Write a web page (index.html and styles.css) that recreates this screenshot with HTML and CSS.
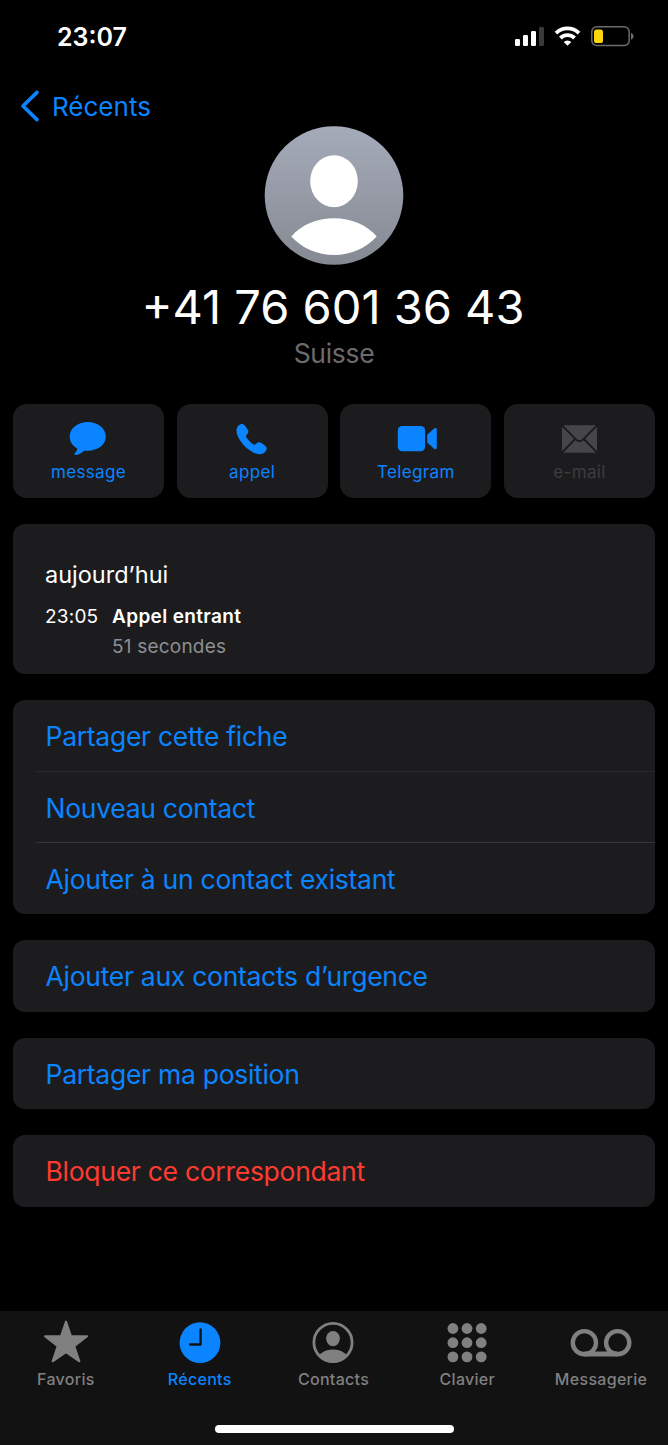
FILE: index.html
```
<!DOCTYPE html>
<html lang="fr">
  <head>
    <meta charset="UTF-8">
    <meta name="viewport" content="width=device-width, initial-scale=1">
    <title>Récents</title>
    <link rel="stylesheet" href="styles.css">
  </head>

  <body>

    <div class="status">
      <span class="heure">23:07</span>
      <svg class="status-icons" width="120" height="22" viewBox="514 25 120 22">
        <g fill="#fff">
          <rect x="515" y="39" width="5" height="7" rx="1.3"/>
          <rect x="523" y="35" width="5" height="11" rx="1.3"/>
          <rect x="531" y="31" width="5" height="15" rx="1.3"/>
        </g>
        <rect x="539" y="27" width="5" height="19" rx="1.3" fill="#3a3a3c"/>
        <g fill="none" stroke="#fff" stroke-width="3.9">
          <path d="M556 33.1a16.4 16.4 0 0 1 23 0"/>
          <path d="M560.4 38a10.2 10.2 0 0 1 14.2 0"/>
        </g>
        <path d="M567.5 45.8l-3.8-3.8a5.5 5.5 0 0 1 7.6 0z" fill="#fff"/>
        <rect x="591.8" y="26.8" width="37.4" height="18.6" rx="5" fill="none" stroke="#6c6c6e" stroke-width="1.5"/>
        <path d="M631 32.8c3.4 1.4 3.4 5.6 0 7z" fill="#6c6c6e"/>
        <rect x="594" y="29.6" width="9" height="13.4" rx="2.6" fill="#ffd60a"/>
      </svg>
    </div>

    <div class="nav">
      <svg width="20" height="32" viewBox="0 0 20 32">
        <path d="M17 2.4L3 16l14 13.6" fill="none" stroke="#0a84ff" stroke-width="3.6" stroke-linecap="round" stroke-linejoin="round"/>
      </svg>
      <span>Récents</span>
    </div>

    <div class="fiche">
      <svg class="avatar" width="140" height="139" viewBox="0 0 140 139">
        <defs>
          <linearGradient id="gris" x1="0" y1="0" x2="0" y2="1">
            <stop offset="0" stop-color="#a5abb9"/>
            <stop offset="1" stop-color="#858992"/>
          </linearGradient>
        </defs>
        <circle cx="70" cy="69.5" r="69.3" fill="url(#gris)"/>
        <ellipse cx="70" cy="55.2" rx="23.8" ry="26" fill="#fff"/>
        <path d="M27.3 110.5C37.5 98.5 52.5 92.2 70 92.2s32.5 6.3 42.7 18.3C101.5 122.5 86.5 129 70 129s-31.500-6.500-42.700-18.500z" fill="#fff"/>
      </svg>
      <h1>+41 76 601 36 43</h1>
      <p class="pays">Suisse</p>
    </div>

    <div class="actions">
      <div class="action">
        <svg width="40" height="36" viewBox="0 0 40 36">
          <path d="M19.800 2C29.900 2 37.800 8.400 37.800 16.500S30 30.700 19.800 30.700c-1.200 0-2.300 0-3.300-.2-2.400 2-5.500 4.200-8.800 4.500-1.200.1-1.700-.8-.9-1.700 1.400-1.500 2.300-3 2.600-4.800C4.600 25.900 1.700 21.700 1.700 16.500 1.700 8.400 9.700 2 19.800 2z" fill="#0a84ff"/>
        </svg>
        <span>message</span>
      </div>
      <div class="action">
        <svg width="40" height="36" viewBox="0 0 40 36">
          <path d="M7.100 4.900c2.100-1.500 4.400-1.300 5.800.7l2.700 4c1.200 1.800 1 3.100-.5 4.600-1.300 1.300-1.500 2-.7 3.400 1.600 2.400 4.300 5.200 6.600 6.600 1.300.8 2.200.6 3.400-.6 1.600-1.600 2.900-1.900 4.600-.8l3.900 2.600c2.200 1.500 2.300 3.700.9 5.600-2.700 3.800-7.400 4.200-12.500 1.500C15 29.400 9.500 23.700 6.200 17.100 3.700 12 3.900 7.200 7.100 4.900z" fill="#0a84ff"/>
        </svg>
        <span>appel</span>
      </div>
      <div class="action">
        <svg width="40" height="36" viewBox="0 0 40 36">
          <rect x="1.800" y="6" width="27.300" height="25.200" rx="4.500" fill="#0a84ff"/>
          <path d="M31.200 14.800l6.600-6.100c1.500-1.200 3-.6 3 1.100v17.600c0 1.700-1.500 2.300-3 1.100l-6.600-6.100z" fill="#0a84ff"/>
        </svg>
        <span>Telegram</span>
      </div>
      <div class="action inactif">
        <svg width="40" height="36" viewBox="0 0 40 36">
          <rect x="2" y="5.200" width="35" height="27.500" rx="2.200" fill="#464648"/>
          <path d="M2.100 5.500l14 14.100q3.400 3.200 6.800 0l14-14.100M2.100 32.500l13-13.500M36.900 32.500l-13-13.500" fill="none" stroke="#1c1c1e" stroke-width="1.900"/>
        </svg>
        <span>e-mail</span>
      </div>
    </div>

    <div class="carte journal">
      <h2>aujourd’hui</h2>
      <div class="appel">
        <span class="quand">23:05</span>
        <span class="type">Appel entrant</span>
        <span class="duree">51 secondes</span>
      </div>
    </div>

    <div class="carte">
      <div class="ligne">Partager cette fiche</div>
      <div class="ligne">Nouveau contact</div>
      <div class="ligne">Ajouter à un contact existant</div>
    </div>

    <div class="carte">
      <div class="ligne">Ajouter aux contacts d’urgence</div>
    </div>

    <div class="carte">
      <div class="ligne">Partager ma position</div>
    </div>

    <div class="carte">
      <div class="ligne rouge">Bloquer ce correspondant</div>
    </div>

    <div class="onglets">
      <div class="barre">
        <div class="onglet">
          <svg width="64" height="44" viewBox="0 0 64 44">
            <path d="M32 1.600L36.900 15.900 53.100 16.300 40.300 26.100 45.400 41.300 32 32.200 18.600 41.300 23.700 26.100 10.900 16.300 27.100 15.900z" fill="#808080" stroke="#808080" stroke-width="2" stroke-linejoin="round"/>
          </svg>
          <span>Favoris</span>
        </div>
        <div class="onglet actif">
          <svg width="64" height="44" viewBox="0 0 64 44">
            <circle cx="32" cy="22.700" r="20.400" fill="#0a84ff"/>
            <path d="M32.600 9.300v15.200H22" fill="none" stroke="#121212" stroke-width="2.300" stroke-linecap="round" stroke-linejoin="round"/>
          </svg>
          <span>Récents</span>
        </div>
        <div class="onglet">
          <svg width="64" height="44" viewBox="0 0 64 44">
            <defs>
              <clipPath id="rond"><circle cx="32" cy="22.500" r="20"/></clipPath>
            </defs>
            <circle cx="32" cy="22.500" r="19.100" fill="none" stroke="#808080" stroke-width="2.800"/>
            <ellipse cx="32" cy="18.600" rx="6.900" ry="7.600" fill="#808080"/>
            <ellipse cx="32" cy="40" rx="15.600" ry="10.400" fill="#808080" clip-path="url(#rond)"/>
          </svg>
          <span>Contacts</span>
        </div>
        <div class="onglet">
          <svg width="64" height="44" viewBox="0 0 64 44">
            <g fill="#808080">
              <circle cx="17.900" cy="8.500" r="5.400"/><circle cx="32" cy="8.500" r="5.400"/><circle cx="46.200" cy="8.500" r="5.400"/>
              <circle cx="17.900" cy="22.700" r="5.400"/><circle cx="32" cy="22.700" r="5.400"/><circle cx="46.200" cy="22.700" r="5.400"/>
              <circle cx="17.900" cy="36.900" r="5.400"/><circle cx="32" cy="36.900" r="5.400"/><circle cx="46.200" cy="36.900" r="5.400"/>
            </g>
          </svg>
          <span>Clavier</span>
        </div>
        <div class="onglet">
          <svg width="64" height="44" viewBox="0 0 64 44">
            <g fill="none" stroke="#808080" stroke-width="4.400">
              <circle cx="15.400" cy="22.700" r="11.600"/>
              <circle cx="48.700" cy="22.700" r="11.600"/>
              <path d="M15.400 34h33.300" stroke-width="5"/>
            </g>
          </svg>
          <span>Messagerie</span>
        </div>
      </div>
      <div class="accueil"></div>
    </div>

  </body>
</html>
```

FILE: styles.css
```
* {
  box-sizing: border-box;
}

body {
  margin: 0;
  height: 1445px;
  display: flex;
  flex-direction: column;
  background: #000;
  color: #fff;
  font-family: Inter, "Liberation Sans", sans-serif;
  white-space: nowrap;
  overflow: hidden;
}

h1, h2, p {
  margin: 0;
  font-weight: 400;
}

svg {
  display: block;
  flex: none;
  overflow: visible;
}

.status {
  height: 72px;
  padding: 1px 34px 0 57px;
  display: flex;
  align-items: center;
  justify-content: space-between;
}

.heure {
  font-size: 25px;
  font-weight: 600;
}

.status-icons {
  margin-bottom: 1px;
}

.nav {
  height: 54px;
  padding: 18px 0 0 20px;
  display: flex;
  align-items: flex-start;
  gap: 12px;
  color: #0a84ff;
  font-size: 26px;
  line-height: 33px;
}

.fiche {
  height: 278px;
  display: flex;
  flex-direction: column;
  align-items: center;
}

.fiche h1 {
  margin-top: 13px;
  padding-right: 2px;
  font-size: 47px;
  line-height: 58px;
}

.pays {
  margin-top: 1px;
  font-size: 26.500px;
  line-height: 32px;
  letter-spacing: -0.3px;
  color: #6b6b6d;
}

.actions {
  margin: 0 13px 26px;
  display: grid;
  grid-template-columns: repeat(4, 1fr);
  gap: 12.700px;
}

.action {
  height: 94px;
  padding-top: 16px;
  border-radius: 14px;
  background: #1c1c1e;
  color: #0a84ff;
  display: flex;
  flex-direction: column;
  align-items: center;
  font-size: 17px;
  line-height: 22px;
  letter-spacing: 0.35px;
}

.action span {
  margin-top: 5px;
}

.inactif {
  color: #3d3d3f;
}

.carte {
  margin: 0 13px 26.100px;
  border-radius: 12px;
  background: #1c1c1e;
}

.journal {
  height: 150px;
  padding: 35px 32px 0;
}

.journal h2 {
  font-size: 23.500px;
  line-height: 32px;
}

.appel {
  margin-top: 11px;
  display: grid;
  grid-template-columns: 67px 1fr;
  font-size: 19px;
  line-height: 30px;
  letter-spacing: 0.2px;
}

.type {
  font-weight: 600;
  letter-spacing: 0.35px;
}

.duree {
  grid-column: 2;
  color: #8e8e93;
}

.ligne {
  height: 71.400px;
  margin-left: 23px;
  padding-left: 9.500px;
  display: flex;
  align-items: center;
  color: #0a84ff;
  font-size: 26.500px;
  letter-spacing: -0.280px;
}

.ligne + .ligne {
  border-top: 1px solid #29292b;
}

.ligne + .ligne + .ligne {
  height: 72px;
  margin-top: -0.600px;
  border-color: #363638;
}

.rouge {
  color: #ff3b30;
}

.onglets {
  height: 134px;
  margin-top: auto;
  padding-top: 9px;
  background: #121212;
}

.barre {
  margin: 0 0 0 -1px;
  display: grid;
  grid-template-columns: repeat(5, 1fr);
}

.onglet {
  display: flex;
  flex-direction: column;
  align-items: center;
  color: #808080;
  font-size: 16px;
  font-weight: 500;
  line-height: 20px;
  letter-spacing: 0.3px;
}

.onglet span {
  margin-top: 5px;
}

.actif {
  color: #0a84ff;
}

.accueil {
  width: 239px;
  height: 8px;
  margin: 36px auto 0;
  border-radius: 4px;
  background: #fff;
}
```
